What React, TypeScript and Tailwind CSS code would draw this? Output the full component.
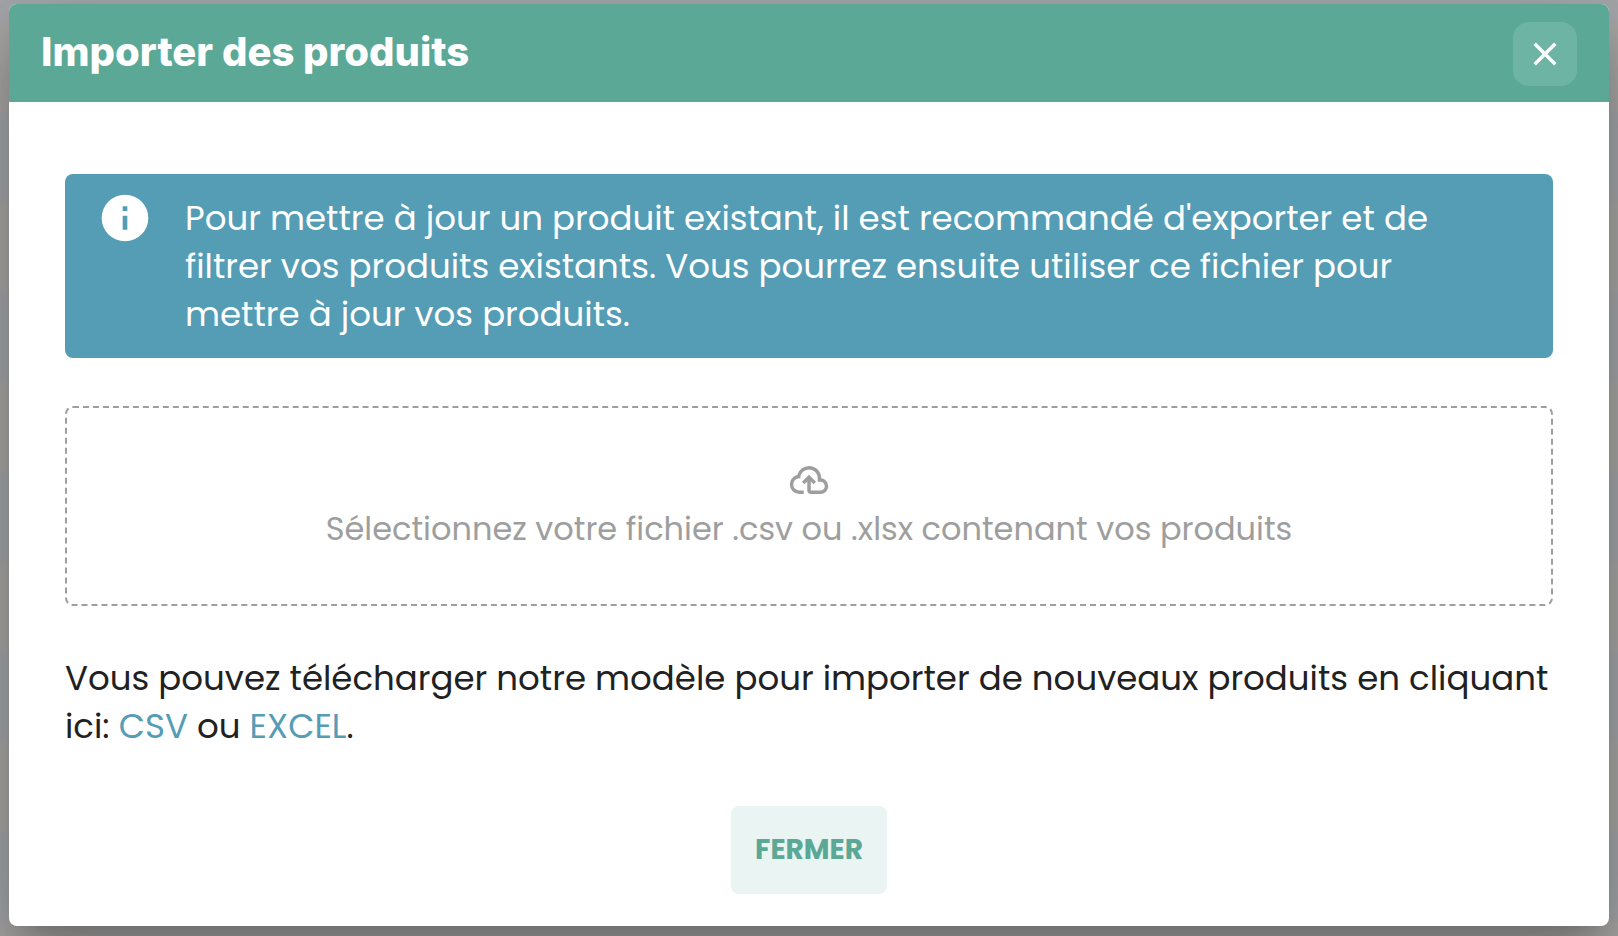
import { useState } from 'react';

const SHADOW = 'shadow-[0_22px_30px_-14px_rgba(0,0,0,0.2),0_48px_76px_6px_rgba(0,0,0,0.14),0_18px_92px_16px_rgba(0,0,0,0.12)]';

// Dimmed table rows behind the dialog
const BACKDROP = 'bg-[repeating-linear-gradient(to_bottom,#a6a7aa_0_22px,#a9a8a7_22px_112px,#a6a7aa_112px_180px)]';

function InfoIcon() {
  return (
    <svg viewBox="0 0 24 24" className="-mt-1 size-14 shrink-0" fill="currentColor" aria-hidden="true">
      <path d="M13 9h-2V7h2m0 10h-2v-6h2m-1-9A10 10 0 0 0 2 12a10 10 0 0 0 10 10 10 10 0 0 0 10-10A10 10 0 0 0 12 2Z" />
    </svg>
  );
}

function CloudUploadIcon() {
  return (
    <svg viewBox="0 0 24 24" className="size-[42px]" fill="currentColor" aria-hidden="true">
      <path d="M6.5 20Q4.22 20 2.61 18.43 1 16.85 1 14.58 1 12.63 2.17 11.1 3.35 9.57 5.25 9.15 5.88 6.85 7.75 5.43 9.63 4 12 4 14.93 4 16.96 6.04 19 8.07 19 11 20.73 11.2 21.86 12.5 23 13.78 23 15.5 23 17.38 21.69 18.69 20.38 20 18.5 20H13Q12.18 20 11.59 19.41 11 18.83 11 18V12.85L9.4 14.4 8 13 12 9 16 13 14.6 14.4 13 12.85V18H18.5Q19.55 18 20.27 17.27 21 16.55 21 15.5 21 14.45 20.27 13.73 19.55 13 18.5 13H17V11Q17 8.93 15.54 7.46 14.08 6 12 6 9.93 6 8.46 7.46 7 8.93 7 11H6.5Q5.05 11 4.03 12.03 3 13.05 3 14.5 3 15.95 4.03 17 5.05 18 6.5 18H9V20Z" />
    </svg>
  );
}

function CloseIcon() {
  return (
    <svg viewBox="0 0 24 24" className="size-6" fill="none" stroke="currentColor" strokeWidth="3.4" aria-hidden="true">
      <path d="M1.7 1.7l20.6 20.6M22.3 1.7l-20.6 20.6" />
    </svg>
  );
}

export default function App() {
  const [open, setOpen] = useState(true);
  const [fileName, setFileName] = useState('');

  return (
    <div className={`min-h-screen overflow-hidden px-[9px] pt-1 pb-[10px] font-['Poppins','Inter',sans-serif] ${BACKDROP}`}>
      {open && (
        <div role="dialog" aria-labelledby="import-title" className={`rounded-lg bg-white ${SHADOW}`}>
          <header className="flex items-start justify-between rounded-t-lg bg-[#5ba897] px-8 pt-[18px] pb-4 text-white">
            <h1 id="import-title" className="font-['Inter',sans-serif] text-[40px] leading-[60px] font-extrabold">
              Importer des produits
            </h1>
            <button
              type="button"
              aria-label="Fermer la fenêtre"
              onClick={() => setOpen(false)}
              className="flex size-16 items-center justify-center rounded-2xl bg-[#6eb4a4]"
            >
              <CloseIcon />
            </button>
          </header>

          <div className="flex flex-col gap-12 px-14 pt-[72px] pb-8">
            <div role="alert" className="flex gap-8 rounded-lg bg-[#559cb5] px-8 py-5 text-white">
              <InfoIcon />
              <p className="pr-6 text-[34px] leading-[48px]">
                Pour mettre à jour un produit existant, il est recommandé d'exporter et de filtrer vos produits existants. Vous pourrez ensuite utiliser ce fichier pour mettre à jour vos produits.
              </p>
            </div>

            <label className="flex h-[200px] cursor-pointer flex-col items-center justify-center gap-1 rounded-lg border-2 border-dashed border-[#9e9e9e] text-[#9e9e9e]">
              <CloudUploadIcon />
              <span className="text-[32px] leading-[48px]">
                {fileName || 'Sélectionnez votre fichier .csv ou .xlsx contenant vos produits'}
              </span>
              <input
                type="file"
                accept=".csv,.xlsx"
                className="sr-only"
                onChange={(e) => setFileName(e.target.files?.[0]?.name ?? '')}
              />
            </label>

            <p className="text-[34px] leading-[48px] text-[#212121]">
              Vous pouvez télécharger notre modèle pour importer de nouveaux produits en cliquant ici:{' '}
              <a href="#csv" className="text-[#559cb5]">CSV</a> ou <a href="#excel" className="text-[#559cb5]">EXCEL</a>.
            </p>

            <button
              type="button"
              onClick={() => setOpen(false)}
              className="mt-2 self-center rounded-lg bg-[#eaf4f2] px-6 py-5 text-[28px] leading-[48px] font-bold text-[#5ba897]"
            >
              FERMER
            </button>
          </div>
        </div>
      )}
    </div>
  );
}
